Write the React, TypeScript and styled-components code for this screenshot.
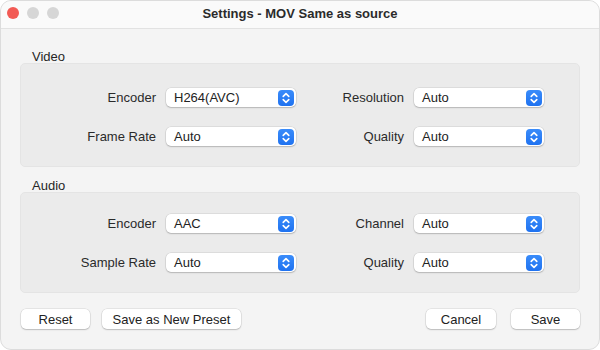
import React from 'react';
import styled, {createGlobalStyle} from 'styled-components';

const GlobalStyle = createGlobalStyle`
    html, body {
        margin: 0;
        padding: 0;
        background: #ffffff;
    }
    body {
        font-family: 'Liberation Sans', Arial, sans-serif;
        -webkit-font-smoothing: antialiased;
    }
`;

type Field = {
    label: string;
    value: string;
};

type Group = {
    title: string;
    top: number;
    bottom: number;
    rows: [Field, Field][];
};

const groups: Group[] = [
    {
        title: 'Video',
        top: 24,
        bottom: 20,
        rows: [
            [{label: 'Encoder', value: 'H264(AVC)'}, {label: 'Resolution', value: 'Auto'}],
            [{label: 'Frame Rate', value: 'Auto'}, {label: 'Quality', value: 'Auto'}],
        ],
    },
    {
        title: 'Audio',
        top: 21,
        bottom: 20,
        rows: [
            [{label: 'Encoder', value: 'AAC'}, {label: 'Channel', value: 'Auto'}],
            [{label: 'Sample Rate', value: 'Auto'}, {label: 'Quality', value: 'Auto'}],
        ],
    },
];

const Stepper = () => (
    <StepperBox>
        <svg
            width='8'
            height='12'
            viewBox='0 0 8 12'
            fill='none'
            stroke='#ffffff'
            strokeWidth='1.6'
            strokeLinecap='round'
            strokeLinejoin='round'
        >
            <path d='M1.2 4.4 L4 1.6 L6.8 4.4'/>
            <path d='M1.2 7.6 L4 10.4 L6.8 7.6'/>
        </svg>
    </StepperBox>
);

const Select = ({value}: {value: string}) => (
    <SelectBox>
        <SelectText>{value}</SelectText>
        <Stepper/>
    </SelectBox>
);

const App = () => {
    return (
        <>
            <GlobalStyle/>
            <Window>
                <TitleBar>
                    <Lights>
                        <Light color='#f25a54'/>
                        <Light color='#d6d6d6'/>
                        <Light color='#d6d6d6'/>
                    </Lights>
                    <Title>{'Settings - MOV Same as source'}</Title>
                </TitleBar>
                <Body>
                    {groups.map((group) => (
                        <Section key={group.title}>
                            <SectionTitle>{group.title}</SectionTitle>
                            <GroupBox
                                top={group.top}
                                bottom={group.bottom}
                            >
                                {group.rows.map((row) => row.map((field, i) => (
                                    <React.Fragment key={`${group.title}-${field.label}-${i}`}>
                                        <Label>{field.label}</Label>
                                        <Select value={field.value}/>
                                    </React.Fragment>
                                )))}
                            </GroupBox>
                        </Section>
                    ))}
                    <Footer>
                        <ButtonGroup>
                            <Button width={69}>{'Reset'}</Button>
                            <Button width={139}>{'Save as New Preset'}</Button>
                        </ButtonGroup>
                        <ButtonGroup gap={15}>
                            <Button width={70}>{'Cancel'}</Button>
                            <Button width={69}>{'Save'}</Button>
                        </ButtonGroup>
                    </Footer>
                </Body>
            </Window>
        </>
    );
};

export default App;

const Window = styled.div`
    width: 600px;
    height: 350px;
    box-sizing: border-box;
    border-radius: 11px;
    border: 1px solid #dcdcdc;
    background: #f4f4f4;
    overflow: hidden;
    display: flex;
    flex-direction: column;
`;

const TitleBar = styled.div`
    position: relative;
    height: 27px;
    flex: none;
    display: flex;
    align-items: center;
    justify-content: center;
    background: #fafafa;
    border-bottom: 1px solid #e2e2e2;
`;

const Lights = styled.div`
    position: absolute;
    left: 6px;
    top: 6px;
    display: flex;
    gap: 8px;
`;

const Light = styled.span<{color: string}>`
    width: 12px;
    height: 12px;
    border-radius: 50%;
    background: ${({color}) => color};
`;

const Title = styled.div`
    font-size: 13px;
    font-weight: 700;
    color: #2b2b2b;
    margin-top: -2px;
`;

const Body = styled.div`
    flex: 1;
    display: flex;
    flex-direction: column;
    padding: 18px 19px 0 19px;
`;

const Section = styled.div`
    display: flex;
    flex-direction: column;
    margin-bottom: 9px;
`;

const SectionTitle = styled.div`
    font-size: 13px;
    height: 16px;
    line-height: 19px;
    color: #262626;
    padding-left: 12px;
`;

const GroupBox = styled.div<{top: number; bottom: number}>`
    display: grid;
    grid-template-columns: 135px 130px 98px 130px;
    column-gap: 10px;
    row-gap: 20px;
    align-items: center;
    padding: ${({top, bottom}) => `${top}px 0 ${bottom}px 0`};
    background: #ebebeb;
    border-radius: 5px;
    border: 1px solid #e4e4e4;
`;

const Label = styled.div`
    font-size: 13px;
    color: #2a2a2a;
    text-align: right;
`;

const SelectBox = styled.div`
    height: 19px;
    display: flex;
    align-items: center;
    justify-content: space-between;
    padding: 0 2px 0 8px;
    background: #ffffff;
    border-radius: 5px;
    box-shadow: 0 0 0 0.5px rgba(0, 0, 0, 0.12), 0 1px 1.5px rgba(0, 0, 0, 0.18);
`;

const SelectText = styled.span`
    font-size: 13px;
    color: #222222;
`;

const StepperBox = styled.span`
    width: 16px;
    height: 16px;
    border-radius: 4px;
    background: linear-gradient(#3a8cfa, #1f72f0);
    display: flex;
    align-items: center;
    justify-content: center;
`;

const Footer = styled.div`
    display: flex;
    justify-content: space-between;
    align-items: center;
    padding: 7px 0 0 1px;
`;

const ButtonGroup = styled.div<{gap?: number}>`
    display: flex;
    gap: ${({gap}) => gap ?? 12}px;
`;

const Button = styled.button<{width: number}>`
    width: ${({width}) => width}px;
    height: 20px;
    padding: 0;
    border: 0;
    border-radius: 5px;
    background: #ffffff;
    font-family: 'Liberation Sans', Arial, sans-serif;
    font-size: 13px;
    color: #222222;
    box-shadow: 0 0 0 0.5px rgba(0, 0, 0, 0.12), 0 1px 1.5px rgba(0, 0, 0, 0.18);
`;
